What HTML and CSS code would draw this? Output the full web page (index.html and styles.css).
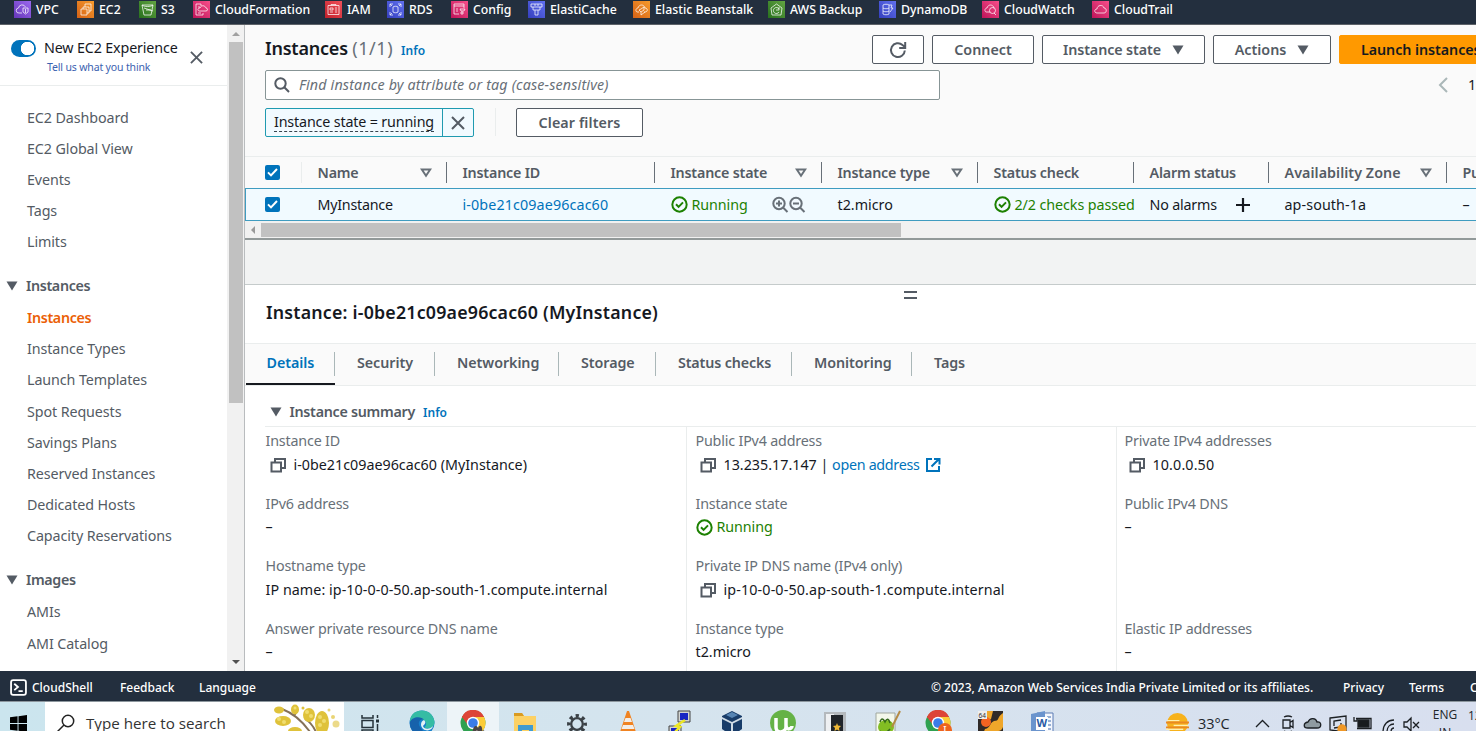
FILE: index.html
```
<!DOCTYPE html>
<html lang="en">
<head>
<meta charset="utf-8">
<title>Instances | EC2</title>
<link rel="stylesheet" href="styles.css">
</head>
<body>
<svg class="defs" aria-hidden="true">
  <symbol id="copy" viewBox="0 0 16 16"><path d="M5 5V2h10v9h-4M1.500 5.500h9.500v9h-9.500z" fill="none" stroke="#545b64" stroke-width="2"/></symbol>
  <symbol id="ok" viewBox="0 0 18 18"><circle cx="9" cy="9" r="7.600" fill="none" stroke="#1d8102" stroke-width="2.100"/><path d="M5.300 8.800l2.700 2.700 4.700-4.800" fill="none" stroke="#1d8102" stroke-width="2.100"/></symbol>
  <symbol id="sort" viewBox="0 0 12 10"><path d="M1.800 1.500h8.400L6 7.800z" fill="none" stroke="#687078" stroke-width="2"/></symbol>
  <symbol id="down" viewBox="0 0 12 10"><path d="M.5.5h11L6 9.500z" fill="#545b64"/></symbol>
  <symbol id="check" viewBox="0 0 15 15"><rect width="15" height="15" rx="2" fill="#0073bb"/><path d="M3 7.400l3 3 6-6.400" fill="none" stroke="#fff" stroke-width="2"/></symbol>
  <symbol id="close" viewBox="0 0 14 14"><path d="M1 1l12 12M13 1L1 13" fill="none" stroke="#545b64" stroke-width="2"/></symbol>
  <symbol id="chrome" viewBox="0 0 26 26"><circle cx="13" cy="13" r="12.500" fill="#2fa150"/><path d="M2 7a12.500 12.500 0 0 1 22 0L13 13z" fill="#dd4437"/><path d="M24 7a12.500 12.500 0 0 1-10 18.500L18 13l-3-6z" fill="#fccc37"/><path d="M12 7h12a12 12 0 0 0-22 0l6 8z" fill="#dd4437"/><circle cx="13" cy="13" r="6.200" fill="#fff"/><circle cx="13" cy="13" r="4.800" fill="#3b7ce8"/></symbol>
</svg>

<nav class="services">
  <a class="svc"><svg class="svc-i violet" viewBox="0 0 17 17"><path d="M8 12H5a2.500 2.500 0 0 1-.5-5 3.700 3.700 0 0 1 7-1M9 7h5v4l-2.500 2L9 11zM11.500 8v4"/></svg><span>VPC</span></a>
  <a class="svc"><svg class="svc-i orange" viewBox="0 0 17 17"><path d="M4 8h6v6H4zM6 8V6h6v6h-2M8 6V3h6v7h-2"/></svg><span>EC2</span></a>
  <a class="svc"><svg class="svc-i green" viewBox="0 0 17 17"><path d="M3 4h11l-2 10H5zM3 4c2 2 9 2 11 0M7 9h5M5 7l9 3"/></svg><span>S3</span></a>
  <a class="svc"><svg class="svc-i pink" viewBox="0 0 17 17"><path d="M8 5V3H3v11h7v-2M5 6h2M5 12h3M8 10H6c-2-1-1-3 1-3 1-3 5-3 6 0 2 0 2 3 0 3z"/></svg><span>CloudFormation</span></a>
  <a class="svc"><svg class="svc-i red" viewBox="0 0 17 17"><path d="M3 4.500h11v9H3zM6 4.500v-1h5v1M5 7h3v2H5zM5 11h3M10 7h2M10 9h2M10 11h2"/></svg><span>IAM</span></a>
  <a class="svc"><svg class="svc-i blue" viewBox="0 0 17 17"><path d="M3 6V3h3M11 3h3v3M14 11v3h-3M6 14H3v-3M6 6c1-1 4-1 5 0v5c-1 1-4 1-5 0zM3 3l2 2M14 3l-2 2M3 14l2-2M14 14l-2-2"/></svg><span>RDS</span></a>
  <a class="svc"><svg class="svc-i pink" viewBox="0 0 17 17"><path d="M3 3h10v4M3 3v10h5M3 5h10M5 8h2M5 10h2M9 8h5l-1 2h-3zM11 10v4M9 12h4"/></svg><span>Config</span></a>
  <a class="svc"><svg class="svc-i blue" viewBox="0 0 17 17"><path d="M3 3h11v3H3zM5 6v3h7V6M7 9v5h3V9M7 3v2M10 3v2"/></svg><span>ElastiCache</span></a>
  <a class="svc"><svg class="svc-i orange" viewBox="0 0 17 17"><path d="M6 11H4c-2-1-1-4 1-4 1-4 6-4 7 0 3 0 3 4 0 4h-1M8 8l3-2v3l-3 2-2-2zM8 11v3l4-3"/></svg><span>Elastic Beanstalk</span></a>
  <a class="svc"><svg class="svc-i green" viewBox="0 0 17 17"><path d="M8.500 3L14 7l-1 7H4L3 7zM11 8a3 3 0 1 0 0 3M11 6v3H8"/></svg><span>AWS Backup</span></a>
  <a class="svc"><svg class="svc-i blue" viewBox="0 0 17 17"><path d="M4 4c1-1 5-1 6 0v9c-1 1-5 1-6 0zM4 7c1 1 5 1 6 0M4 10c1 1 5 1 6 0M10 4h3l-1 3h2l-3 4"/></svg><span>DynamoDB</span></a>
  <a class="svc"><svg class="svc-i pink" viewBox="0 0 17 17"><path d="M8 11H4c-2-1-1-4 1-4 1-4 6-4 7 0M12 12l2 2"/><circle cx="10.500" cy="9.500" r="3"/></svg><span>CloudWatch</span></a>
  <a class="svc"><svg class="svc-i pink" viewBox="0 0 17 17"><path d="M12 12H5c-3 0-3-4 0-4 0-4 6-5 7-1 3 0 3 5 0 5"/></svg><span>CloudTrail</span></a>
</nav>

<div class="workspace">
  <aside class="side">
    <div class="side-body">
      <div class="promo">
        <span class="toggle"></span>
        <div class="promo-text"><div class="promo-title">New EC2 Experience</div><a class="promo-link">Tell us what you think</a></div>
        <svg class="x" viewBox="0 0 14 14"><use href="#close"/></svg>
      </div>
      <ul class="nav first"><li>EC2 Dashboard</li><li>EC2 Global View</li><li>Events</li><li>Tags</li><li>Limits</li></ul>
      <div class="nav-head"><svg class="tri"><use href="#down"/></svg>Instances</div>
      <ul class="nav"><li class="active">Instances</li><li>Instance Types</li><li>Launch Templates</li><li>Spot Requests</li><li>Savings Plans</li><li>Reserved Instances</li><li>Dedicated Hosts</li><li>Capacity Reservations</li></ul>
      <div class="nav-head images"><svg class="tri"><use href="#down"/></svg>Images</div>
      <ul class="nav"><li>AMIs</li><li>AMI Catalog</li></ul>
    </div>
    <div class="vscroll"><i class="arrow up"></i><i class="thumb"></i><i class="arrow dn"></i></div>
  </aside>

  <main class="main">
    <section class="list">
      <header class="bar">
        <h1>Instances <span>(1/1)</span></h1><a class="info">Info</a>
        <div class="actions">
          <button class="btn refresh"><svg viewBox="0 0 18 18"><path d="M15.800 9.500a6.900 6.900 0 1 1-2.300-5.500L16 6M16.200 1v6h-6" fill="none" stroke="#545b64" stroke-width="2"/></svg></button>
          <button class="btn connect">Connect</button>
          <button class="btn state"><span>Instance state</span><svg class="tri"><use href="#down"/></svg></button>
          <button class="btn act">Actions<svg class="tri"><use href="#down"/></svg></button>
          <button class="btn primary">Launch instances</button>
        </div>
      </header>
      <div class="search-row">
        <div class="search"><svg viewBox="0 0 16 16"><circle cx="6.500" cy="6.500" r="5.200"/><path d="M10.300 10.300L15 15"/></svg><span>Find instance by attribute or tag (case-sensitive)</span></div>
        <div class="pager"><svg viewBox="0 0 10 16"><path d="M9 1L2 8l7 7" fill="none" stroke="#aab7b8" stroke-width="2"/></svg><span>1</span></div>
      </div>
      <div class="filters">
        <div class="token"><span class="token-t"><u>Instance state = running</u></span><span class="token-x"><svg viewBox="0 0 14 14"><use href="#close"/></svg></span></div>
        <i class="sep"></i>
        <button class="btn clear">Clear filters</button>
      </div>
      <div class="row head">
        <div class="c0"><svg class="cb"><use href="#check"/></svg></div>
        <div>Name<svg class="so"><use href="#sort"/></svg></div>
        <div>Instance ID</div>
        <div>Instance state<svg class="so"><use href="#sort"/></svg></div>
        <div>Instance type<svg class="so"><use href="#sort"/></svg></div>
        <div>Status check</div>
        <div>Alarm status</div>
        <div class="zone">Availability Zone<svg class="so"><use href="#sort"/></svg></div>
        <div>Public</div>
      </div>
      <div class="row data">
        <div class="c0"><svg class="cb"><use href="#check"/></svg></div>
        <div class="myi">MyInstance</div>
        <div class="link idl">i-0be21c09ae96cac60</div>
        <div class="green-t"><svg class="ok"><use href="#ok"/></svg><span>Running</span>
          <svg class="zooms" viewBox="0 0 33 17"><g fill="none" stroke="#687078" stroke-width="2"><circle cx="7" cy="7.500" r="5.700"/><path d="M4 7.500h6M7 4.500v6M11 11.500l4.500 4.500"/><circle cx="24" cy="7.500" r="5.700"/><path d="M21 7.500h6M28 11.500l4.500 4.500"/></g></svg></div>
        <div>t2.micro</div>
        <div class="green-t"><svg class="ok"><use href="#ok"/></svg><span>2/2 checks passed</span></div>
        <div class="alarms">No alarms<svg class="plus" viewBox="0 0 16 16"><path d="M8 1v14M1 8h14" stroke="#16191f" stroke-width="2.200"/></svg></div>
        <div class="az">ap-south-1a</div>
        <div>–</div>
      </div>
      <div class="hscroll"><i class="arrow lf"></i><i class="hthumb"></i></div>
    </section>

    <div class="gap"></div>

    <section class="detail">
      <i class="grip"></i>
      <h2>Instance: i-0be21c09ae96cac60 (MyInstance)</h2>
      <div class="tabs"><a class="on">Details</a><a>Security</a><a>Networking</a><a>Storage</a><a>Status checks</a><a>Monitoring</a><a>Tags</a></div>
      <div class="summary"><svg class="tri"><use href="#down"/></svg><b>Instance summary</b><a class="info">Info</a></div>
      <div class="facts">
        <dl><dt>Instance ID</dt><dd><svg class="cp"><use href="#copy"/></svg>i-0be21c09ae96cac60 (MyInstance)</dd>
          <dt>IPv6 address</dt><dd>–</dd>
          <dt>Hostname type</dt><dd class="host">IP name: ip-10-0-0-50.ap-south-1.compute.internal</dd>
          <dt>Answer private resource DNS name</dt><dd>–</dd></dl>
        <dl><dt>Public IPv4 address</dt><dd class="addr"><svg class="cp"><use href="#copy"/></svg>13.235.17.147 |&nbsp;<a class="link">open address</a><svg class="ext" viewBox="0 0 16 16"><path d="M7 2H2v12h12V9M9 2h5.500v5.500M14 2L6.500 9.500" fill="none" stroke="#0073bb" stroke-width="2"/></svg></dd>
          <dt>Instance state</dt><dd class="green-t"><svg class="ok"><use href="#ok"/></svg><span>Running</span></dd>
          <dt>Private IP DNS name (IPv4 only)</dt><dd class="wide"><svg class="cp"><use href="#copy"/></svg>ip-10-0-0-50.ap-south-1.compute.internal</dd>
          <dt>Instance type</dt><dd>t2.micro</dd></dl>
        <dl><dt>Private IPv4 addresses</dt><dd class="wide"><svg class="cp"><use href="#copy"/></svg>10.0.0.50</dd>
          <dt>Public IPv4 DNS</dt><dd>–</dd>
          <dt>&nbsp;</dt><dd>&nbsp;</dd>
          <dt>Elastic IP addresses</dt><dd>–</dd></dl>
      </div>
    </section>
  </main>
</div>

<footer class="footer">
  <svg class="shell" viewBox="0 0 16 16"><rect x="1" y="1" width="14" height="14" rx="2" fill="none" stroke="#fff" stroke-width="1.700"/><path d="M4 4.500l3.500 3L4 10.500M8 11.500h4" fill="none" stroke="#fff" stroke-width="1.700"/></svg>
  <span class="f-shell">CloudShell</span><span class="f-feed">Feedback</span><span class="f-lang">Language</span>
  <span class="copyright">© 2023, Amazon Web Services India Private Limited or its affiliates.</span><span class="f-priv">Privacy</span><span class="f-terms">Terms</span><span>Cookie</span>
</footer>

<div class="taskbar">
  <div class="start"><svg viewBox="0 0 18 18"><path d="M0 2.500l8-1.100V8.500H0zM9 1.300L18 0v8.500H9zM0 9.500h8v7.100l-8-1.100zM9 9.500h9V18l-9-1.300z"/></svg></div>
  <div class="tsearch"><svg class="mag" viewBox="0 0 18 18"><circle cx="11" cy="7" r="5.700"/><path d="M7 11l-6.500 6.500"/></svg><span>Type here to search</span>
    <svg class="flower" viewBox="0 0 68 27"><path d="M8 4q16 6 28 23M20 11l4-7M42 27q-4-9-11-13" stroke="#84715a" stroke-width="2" fill="none"/><g fill="#dfc23a"><ellipse cx="5" cy="5" rx="5" ry="3.500"/><ellipse cx="21" cy="4.500" rx="4" ry="5"/><ellipse cx="9" cy="16" rx="8" ry="5"/><ellipse cx="35" cy="10" rx="6" ry="7"/><ellipse cx="48" cy="18" rx="7" ry="12"/><ellipse cx="21" cy="26" rx="7" ry="4"/><circle cx="62" cy="19" r="3.500" opacity=".6"/><circle cx="55" cy="5" r="1.500" opacity=".7"/><circle cx="29" cy="3" r="1.500"/><circle cx="59" cy="12" r="2" opacity=".7"/></g><g fill="#f0dd70"><circle cx="5" cy="14" r="2"/><circle cx="10" cy="17" r="2"/><circle cx="33" cy="7" r="2"/><circle cx="37" cy="11" r="2"/><circle cx="46" cy="12" r="2"/><circle cx="50" cy="16" r="2"/><circle cx="46" cy="20" r="2"/><circle cx="21" cy="3" r="1.500"/></g></svg></div>
  <div class="apps">
    <div class="app"><svg viewBox="0 0 26 26"><path d="M5 5v3h11V5M5 25v-5h11v5M5 10.500h11v7H5zM20.500 5v3M20.500 14v10" fill="none" stroke="#25323a" stroke-width="1.500"/><rect x="19" y="9.500" width="3" height="3" fill="#25323a"/></svg></div>
    <div class="app"><svg viewBox="0 0 26 26"><circle cx="13" cy="13" r="12.500" fill="#1780cb"/><path d="M1 11C2-3 24-3 25.500 12c0 7-8 8-10 5 4-3 0-9-5-8S1 13 1 11z" fill="#35bca4"/><path d="M1 12c2-6 12-6 14-2-4-2-7 3-4 7l6 8C7 27 0 20 1 12z" fill="#1762ab"/><path d="M15 10c3 3 0 5-1 6 1 4 8 3 10 0-1 6-11 6-12-1 0-3 1-4 3-5z" fill="#e4f0f5"/></svg></div>
    <div class="app current"><svg viewBox="0 0 26 26"><use href="#chrome"/><path d="M13 26c-2-8 3-13 5-8 2-5 5-1 4 3 2-2 4 1 3 5z" fill="#4c4544"/><path d="M15 22l2-2 2 3 2-2 1 4h-8z" fill="#b5aaa3"/></svg></div>
    <div class="app"><svg viewBox="0 0 26 26"><path d="M2 3h8l2 3h12v20H2z" fill="#fcd164"/><path d="M2 3h8l2 3H2z" fill="#d99b22"/><path d="M6 26V15h15v11h-4v-6h-7v6z" fill="#409bd0"/></svg></div>
    <div class="app"><svg viewBox="0 0 26 26"><g fill="none" stroke="#3b4146"><circle cx="13" cy="14" r="5.800" stroke-width="2.300"/><circle cx="13" cy="14" r="8.200" stroke-width="3.500" stroke-dasharray="3.220 3.220" stroke-dashoffset="1.600"/></g></svg></div>
    <div class="app"><svg viewBox="0 0 26 26"><path d="M12 1h2l7 21H5z" fill="#f08322"/><path d="M10.500 8h5l1.500 4H9zM8 15h10l1.500 4h-13z" fill="#f3eee9"/><path d="M4 21h18l3 5H1z" fill="#ef8021"/></svg></div>
    <div class="app"><svg viewBox="0 0 26 26"><path d="M11 1h12v11H11zM2 16h12v10H2z" fill="#d3d5d1" stroke="#444"/><path d="M13 3h8v7h-8zM4 18h8v7H4z" fill="#1825c3"/><path d="M18 10l-9 6 4 1-6 6" fill="none" stroke="#ede723" stroke-width="2.500"/></svg></div>
    <div class="app"><svg viewBox="0 0 26 26"><path d="M13 1l10 5v13l-10 7-10-7V6z" fill="#183c69"/><path d="M3 7l10 5 10-5v2l-10 5L3 9zM12 13h2v12h-2z" fill="#cfdbe5"/><path d="M13 2l6 3-6 3-6-3z" fill="#5684b3"/></svg></div>
    <div class="app"><svg viewBox="0 0 26 26"><circle cx="13" cy="13" r="13" fill="#65b246"/><path d="M6 8v9c0 8 10 5 10 0V8M16 15c0 6 6 4 6 1" fill="none" stroke="#fff" stroke-width="3.500"/></svg></div>
    <div class="app"><svg viewBox="0 0 26 26"><path d="M2 2h22v24H2z" fill="#b4b9bd"/><path d="M4 4h8v22H4z" fill="#eef0f2"/><path d="M9 5h12v21H9z" fill="#20252a"/><path d="M15 13l1 2.500 3 .5-2 2 .5 3-2.500-1.500-2.500 1.500.5-3-2-2 3-.5z" fill="#efb936"/></svg></div>
    <div class="app"><svg viewBox="0 0 26 26"><path d="M2 3h19v23H2z" fill="#f3f7eb" stroke="#a0a79e"/><ellipse cx="12" cy="17" rx="8" ry="7" fill="#82bd23"/><path d="M6 12q2-6 5 0 3-6 5 1M6 21q5 4 10-2" fill="none" stroke="#36691c" stroke-width="1.500"/><path d="M26 1l-8 16" stroke="#b48a44" stroke-width="2"/></svg></div>
    <div class="app"><svg viewBox="0 0 26 26"><use href="#chrome"/><circle cx="20" cy="20" r="7" fill="#ee641d"/><text x="18" y="24" font-size="11" fill="#fff" font-family="Noto Sans">I</text></svg></div>
    <div class="app"><svg viewBox="0 0 26 26"><path d="M1 1h25v25H1z" fill="#302a28"/><path d="M6 1h10L14 9q-4 3-8-1zM26 3c-7 5-3 8-9 8-5 2-3 7-9 8l-3 7h9c0-9 10-1 12-9z" fill="#efa62a"/><circle cx="9" cy="12" r="5" fill="#f36321"/><path d="M1 1h9v8H1z" fill="#eee"/><text x="1.500" y="7.500" font-size="6.500" fill="#333" font-family="Noto Sans">64</text></svg></div>
    <div class="app"><svg viewBox="0 0 26 26"><path d="M8 3h16v23H8z" fill="#f4f7fd" stroke="#5a7bb4"/><path d="M2 4l14-3v25H2z" fill="#6b94cd"/><path d="M18 7h4M18 11h4M18 15h4M18 19h4" stroke="#3b69ad"/><path d="M7 7h12v13H7z" fill="#fff"/><text x="7.500" y="17" font-size="11" font-weight="bold" fill="#285aa5" font-family="Noto Sans">W</text></svg></div>
  </div>
  <div class="tray">
    <svg class="weather" viewBox="0 0 24 24"><circle cx="12" cy="12" r="11" fill="#f7b21c"/><path d="M1 9h13M8 14h15M0 18h18" stroke="#fff0b0" stroke-width="1.500"/><path d="M0 11h24M0 16h24M2 21h20" stroke="#e98922" stroke-width="2"/></svg>
    <span class="temp">33°C</span>
    <svg class="icons" viewBox="0 0 170 20"><g fill="none" stroke="#1c2024" stroke-width="1.300"><path d="M1 13l6.500-6.500L14 13M28 6h7v8h-7zM35 8.500l3-2v7l-3-2M29 3q4-2 8 0M29 17q4 2 8 0"/><path d="M53 14c-5 0-5-5 0-6 2-5 8-4 9 0 5-1 5 6 0 6z" fill="#8f9ba1"/><path d="M75 4l16-2v16l-16-2zM79 12V7l7-1M86 9v4l-7 1"/><circle cx="87" cy="15" r="4" fill="#f09826" stroke="#f09826"/><path d="M103 6h11v7h-11z" fill="#171b1e"/><path d="M101 4.500h15v10h-14M102 4v3h-3V4.500M99 3v2M128 18c0-8 5-12 11-12M132 18c0-5 3-8 7-8M136 18q0-4 3-4M149 8h3l4-4v13l-4-4h-3zM158 8l6 6M164 8l-6 6"/></g></svg>
    <div class="lang">ENG<br>IN</div>
    <div class="clock">12:05<br>28</div>
  </div>
</div>
</body>
</html>
```
FILE: styles.css
```
* { box-sizing: border-box; }
body { margin: 0; width: 1476px; height: 731px; overflow: hidden; font: 14.3px/20px "Noto Sans", "Open Sans", sans-serif; color: #16191f; background: #fff; }
.defs { display: none; }
svg { flex: none; overflow: visible; }
ul, dl, dd, h1, h2 { margin: 0; padding: 0; list-style: none; }
i { display: block; }

/* service shortcuts */
.services { height: 25px; overflow: hidden; background: #232f3e; padding-left: 14px; display: grid; grid-template-columns: 63px 62px 54px 132px 62px 64px 77px 105px 135px 111px 103px 110px 100px; border-bottom: 1px solid #5d6268; }
.svc { display: flex; align-items: center; gap: 5px; height: 18px; color: #fff; font-size: 12.300px; font-weight: 500; white-space: nowrap; }
.svc span { padding-top: 1px; }
.svc-i { width: 17px; height: 17px; fill: none; stroke: rgba(255,255,255,.82); stroke-width: .9; }
.violet { background: linear-gradient(45deg, #6637b9, #9b68ee); }
.orange { background: linear-gradient(45deg, #d56216, #f69a2c); }
.green { background: linear-gradient(45deg, #28701e, #62a442); }
.pink { background: linear-gradient(45deg, #bd1459, #f84e8a); }
.red { background: linear-gradient(45deg, #bf202a, #f1505a); }
.blue { background: linear-gradient(45deg, #353fbd, #6070ef); }

.workspace { display: flex; height: 646px; }

/* left navigation */
.side { width: 245px; display: flex; border-right: 1px solid #b9bcbe; }
.side-body { width: 227px; overflow: hidden; }
.promo { height: 61px; border-bottom: 1px solid #eaeded; display: flex; padding-left: 11px; }
.toggle { width: 25px; height: 17px; margin-top: 15px; border-radius: 9px; background: radial-gradient(circle at 16.500px 8.500px, #fff 6.500px, #0073bb 7px); }
.promo-text { width: 141px; margin-left: 8px; padding-top: 13px; white-space: nowrap; letter-spacing: -.15px; }
.promo-link { display: block; margin-left: 3px; font-size: 10.500px; line-height: 18px; color: #3b62b0; }
.x { width: 13px; height: 13px; margin: 26px 0 0 5px; }
.nav li { height: 31.200px; line-height: 31px; padding-left: 27px; color: #545b64; white-space: nowrap; letter-spacing: -.1px; }
.nav.first { padding-top: 15.500px; }
.nav .active { color: #eb5f07; font-weight: 600; letter-spacing: -.35px; }
.nav-head { display: flex; align-items: center; height: 32px; margin-top: 12.500px; padding-left: 6px; color: #545b64; font-weight: 600; letter-spacing: -.35px; }
.tri { width: 12px; height: 10px; }
.nav-head .tri { margin-right: 8px; }
.images { margin-top: 13px; }
.vscroll { width: 17px; background: #f1f1f1; display: flex; flex-direction: column; align-items: center; }
.arrow { border: 4px solid transparent; width: 0; height: 0; }
.up { border-bottom-color: #a0a0a0; border-top: 0; margin: 7px 0 6px; }
.dn { border-top-color: #505050; border-bottom: 0; margin: auto 0 7px; }
.thumb { width: 14px; height: 361px; background: #c1c1c1; }

/* instance list */
.main { flex: 1; min-width: 0; overflow: hidden; background: #f2f3f3; }
.list { height: 215px; background: #fafafa; border-bottom: 2px solid #929999; white-space: nowrap; }
.bar { display: flex; padding: 10px 0 0 20px; height: 45px; }
h1 { font-size: 18px; line-height: 26px; font-weight: 600; letter-spacing: -.22px; }
h1 span { font-weight: 400; color: #687078; letter-spacing: .55px; }
.info { color: #0073bb; font-size: 12px; font-weight: 600; margin: 6px 0 0 8px; }
.actions { margin-left: auto; width: 604px; display: flex; gap: 8px; overflow: hidden; }
.btn { flex: none; height: 29px; padding: 0; border: 1px solid #545b64; border-radius: 2px; background: #fff; color: #545b64; font: 600 14.300px/20px "Noto Sans", sans-serif; display: flex; align-items: center; justify-content: center; white-space: nowrap; }
.refresh { width: 52px; }
.refresh svg { width: 18px; }
.connect { width: 102px; }
.state { width: 163px; gap: 11px; }
.state span { letter-spacing: -.1px; }
.act { width: 118px; gap: 11px; }
.primary { width: 160px; background: #ff9900; border-color: #ff9900; color: #16191f; justify-content: flex-start; padding-left: 21px; letter-spacing: -.06px; }
.search-row { display: flex; justify-content: space-between; padding-left: 20px; }
.search { width: 675px; height: 30px; border: 1px solid #879596; border-radius: 2px; background: #fff; display: flex; align-items: center; font-style: italic; color: #687078; letter-spacing: .16px; }
.search svg { width: 16px; margin: 0 9px 0 8px; fill: none; stroke: #545b64; stroke-width: 2; }
.pager { display: flex; align-items: center; gap: 20px; width: 38px; overflow: hidden; }
.pager svg { width: 10px; height: 16px; }
.filters { display: flex; padding: 8px 0 0 20px; height: 56px; }
.token { width: 209px; height: 29px; display: flex; border: 1px solid #1f9ab0; border-radius: 2px; background: #f1faff; }
.token-t { width: 177px; padding: 3px 0 0 8px; border-right: 1px solid #1f9ab0; letter-spacing: -.16px; }
.token u { display: inline-block; line-height: 18px; text-decoration: none; border-bottom: 1px dashed #37434d; }
.token-x { flex: 1; display: flex; align-items: center; justify-content: center; }
.token-x svg { width: 14px; }
.sep { width: 1px; height: 28px; margin-left: 21px; background: #eaeded; }
.clear { width: 127px; margin-left: 20px; letter-spacing: .1px; }
.row { display: grid; grid-template-columns: 57px 145px 208px 167px 156px 156px 135px 178px 60px; width: 1262px; }
.row > div { display: flex; align-items: center; padding-left: 15.500px; overflow: hidden; }
.row .c0 { padding-left: 20px; }
.head { height: 32px; border-top: 1px solid #eaeded; color: #545b64; font-weight: 600; letter-spacing: -.2px; }
.head > div { position: relative; }
.head > .zone { letter-spacing: .05px; }
.head > div:not(.c0):not(:last-child)::after, .head .c0::after { content: ""; position: absolute; right: 0; top: 5px; height: 21px; border-right: 1px solid #687078; }
.head .c0::after { border-color: #eaeded; }
.cb { width: 15px; height: 15px; }
.so { width: 12px; height: 10px; margin-left: auto; margin-right: 15px; }
.data { height: 33px; border: 1px solid #3f9cc0; background: #f1faff; }
.data > div { padding-left: 14.500px; }
.data .c0 { padding-left: 19px; }
.data .myi { letter-spacing: -.25px; }
.data .alarms { letter-spacing: -.2px; }
.idl { letter-spacing: .12px; }
.az { letter-spacing: .1px; }
.link { color: #0073bb; }
.green-t { color: #1d8102; letter-spacing: -.08px; }
.ok { width: 17px; height: 17px; margin-right: 4px; }
.zooms { width: 33px; height: 17px; margin-left: 24px; }
.plus { width: 16px; height: 16px; margin-left: 18px; }
.hscroll { display: flex; align-items: center; height: 17px; background: #f1f1f1; }
.lf { border-right-color: #999; border-left: 0; margin: 0 6px 0 6px; }
.hthumb { width: 640px; height: 14px; background: #c1c1c1; }
.gap { height: 44px; }

/* instance details */
.detail { position: relative; height: 387px; background: #fff; border-top: 1px solid #c5cbcb; white-space: nowrap; }
.grip { position: absolute; left: 659px; top: 6px; width: 13px; height: 8px; border: solid #545b64; border-width: 2px 0; }
h2 { height: 58px; padding: 15px 0 0 21px; font-size: 17.800px; line-height: 24px; font-weight: 600; letter-spacing: .2px; }
.tabs { display: flex; height: 43px; padding-left: 1px; background: #fafafa; border: solid #eaeded; border-width: 1px 0; }
.tabs a { position: relative; color: #545b64; font-weight: 600; padding: 9px 0 0 22px; letter-spacing: -.06px; }
.tabs a:nth-child(1) { width: 89px; padding-left: 20.500px; }
.tabs a:nth-child(2) { width: 100px; }
.tabs a:nth-child(3) { width: 124px; }
.tabs a:nth-child(4) { width: 97px; }
.tabs a:nth-child(5) { width: 136px; letter-spacing: -.15px; }
.tabs a:nth-child(6) { width: 120px; }
.tabs a:not(:last-child)::after { content: ""; position: absolute; right: 0; top: 8px; height: 24px; border-right: 1px solid #aab7b8; }
.tabs .on { color: #0073bb; border-bottom: 2px solid #16191f; }
.summary { display: flex; align-items: center; height: 41px; margin-left: 20px; padding: 12px 0 0 5px; border-bottom: 1px solid #eaeded; }
.summary b { margin-left: 7.500px; font-weight: 600; color: #545b64; letter-spacing: -.28px; }
.summary .info { margin-top: 1px; }
.facts { display: grid; grid-template-columns: 421px 430px 400px; padding-left: 20px; }
dl { padding: 3px 0 0 8.500px; height: 244px; border-left: 1px solid #eaeded; }
dl:last-child { padding-left: 7.500px; }
dl:first-child { padding-left: .5px; border: 0; }
dt { height: 22px; line-height: 22px; color: #687078; letter-spacing: -.18px; }
dd { display: flex; align-items: center; height: 25px; margin-bottom: 15.500px; }
.host { letter-spacing: .06px; }
.wide { letter-spacing: .13px; }
.addr .link { letter-spacing: -.3px; }
.cp { width: 16px; height: 16px; margin: 0 8px 0 4px; }
.ext { width: 16px; height: 16px; margin-left: 5px; }

/* console footer */
.footer { height: 31px; background: #232f3e; border-bottom: 1px solid #8d979e; display: flex; align-items: center; padding: 3px 0 0 10px; color: #fff; font-size: 12px; font-weight: 500; white-space: nowrap; }
.shell { width: 17px; height: 17px; margin-right: 5px; }
.f-shell { width: 88px; }
.f-feed { width: 79px; }
.copyright { margin-left: auto; flex: none; width: 412px; }
.f-lang { width: 80px; }
.f-priv { flex: none; width: 66px; }
.f-terms { flex: none; width: 61px; }
.footer > :last-child { flex: none; width: 6px; overflow: hidden; }

/* desktop taskbar */
.taskbar { height: 29px; overflow: hidden; display: flex; background: linear-gradient(90deg, #cbe5ee, #d5e4ee 45%, #d8dfef); }
.start { width: 45px; padding: 13px 0 0 10px; }
.start svg { width: 17px; height: 17px; }
.tsearch { width: 299px; background: #fff; display: flex; padding-left: 12px; font-size: 15.200px; line-height: 42px; white-space: nowrap; font-family: "Open Sans", sans-serif; color: #333; }
.mag { width: 18px; height: 18px; margin: 12px 11px 0 0; fill: none; stroke: #222; stroke-width: 1.500; }
.flower { width: 68px; height: 27px; margin: 3px 2px 0 auto; }
.apps { display: flex; }
.app { width: 51.700px; height: 29px; display: flex; justify-content: center; padding-top: 8px; }
.app svg { width: 26px; height: 26px; }
.current { background: #edf4f8; }
.tray { margin-left: auto; width: 310px; display: flex; font: 14.500px/18px "Open Sans", sans-serif; color: #20252a; white-space: nowrap; }
.weather { width: 23px; height: 23px; margin-top: 10px; }
.temp { flex: none; margin: 13px 0 0 9px; width: 57px; letter-spacing: -.1px; }
.icons { width: 170px; height: 20px; margin-top: 12px; }
.lang { flex: none; margin: 4px 0 0 5px; width: 30px; text-align: center; font-size: 12px; line-height: 18px; }
.clock { margin: 5px 0 0 8px; font-size: 12px; text-align: right; }
```
